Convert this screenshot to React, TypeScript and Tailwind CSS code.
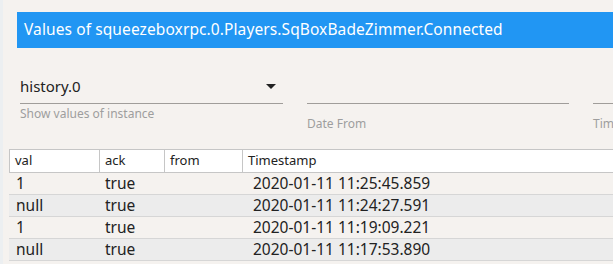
import React from 'react';

interface Row {
  val: string;
  ack: string;
  from: string;
  ts: string;
}

const rows: Row[] = [
  { val: '1', ack: 'true', from: '', ts: '2020-01-11 11:25:45.859' },
  { val: 'null', ack: 'true', from: '', ts: '2020-01-11 11:24:27.591' },
  { val: '1', ack: 'true', from: '', ts: '2020-01-11 11:19:09.221' },
  { val: 'null', ack: 'true', from: '', ts: '2020-01-11 11:17:53.890' },
];

const font = { fontFamily: '"Noto Sans", "Open Sans", sans-serif' };

const App: React.FC = () => {
  return (
    <div className="flex w-[613px] h-[264px] overflow-hidden bg-[#f5f2ef]" style={font}>
      {/* linke Leiste */}
      <div className="w-[3px] shrink-0 bg-[#eceff1]" />

      <div className="flex-1 flex flex-col min-w-0">
        {/* Titel */}
        <div className="mt-[12px] ml-[14px] h-[36px] bg-[#2196f3] text-white text-[15.5px] tracking-[0.1px] pl-[7px] flex items-center whitespace-nowrap overflow-hidden">
          Values of squeezeboxrpc.0.Players.SqBoxBadeZimmer.Connected
        </div>

        {/* Felder */}
        <div className="flex gap-[24px] ml-[17px] mt-[21px] h-[81px] whitespace-nowrap">
          <div className="w-[263px] shrink-0 flex flex-col">
            <div className="h-[35px] border-b border-[#a09d9a] flex items-center justify-between text-[15px] text-[#222]">
              <span>history.0</span>
              <svg width="10" height="5" viewBox="0 0 10 5" className="mr-[7px]">
                <path d="M0 0 L10 0 L5 5 Z" fill="#222" />
              </svg>
            </div>
            <div className="text-[12px] text-[#9e9e9e] mt-[1px]">Show values of instance</div>
          </div>
          <div className="w-[262px] shrink-0 flex flex-col">
            <div className="h-[35px] border-b border-[#a09d9a]" />
            <div className="text-[12px] text-[#9e9e9e] mt-[11px]">Date From</div>
          </div>
          <div className="w-[262px] shrink-0 flex flex-col">
            <div className="h-[35px] border-b border-[#a09d9a]" />
            <div className="text-[12px] text-[#9e9e9e] mt-[11px]">Time From</div>
          </div>
        </div>

        {/* Tabelle */}
        <div className="ml-[6px] mt-[-1px] whitespace-nowrap">
          <div className="flex h-[24px] bg-white border-y border-l border-[#c6c6c6] text-[13px] text-[#222]">
            <div className="w-[90px] border-r border-[#c6c6c6] pl-[5px] flex items-center">val</div>
            <div className="w-[65px] border-r border-[#c6c6c6] pl-[5px] flex items-center">ack</div>
            <div className="w-[78px] border-r border-[#c6c6c6] pl-[5px] flex items-center">from</div>
            <div className="flex-1 pl-[5px] flex items-center">Timestamp</div>
          </div>
          {rows.map((r, i) => (
            <div
              key={i}
              className={`flex h-[22px] border-b border-[#d6d6d6] text-[15.5px] text-[#222] ${i % 2 === 1 ? 'bg-[#ececec]' : ''}`}
            >
              <div className="w-[91px] pl-[7px] flex items-center">{r.val}</div>
              <div className="w-[65px] pl-[5px] flex items-center">{r.ack}</div>
              <div className="w-[78px] pl-[5px] flex items-center">{r.from}</div>
              <div className="flex-1 pl-[10px] flex items-center">{r.ts}</div>
            </div>
          ))}
        </div>
      </div>
    </div>
  );
};

export default App;
